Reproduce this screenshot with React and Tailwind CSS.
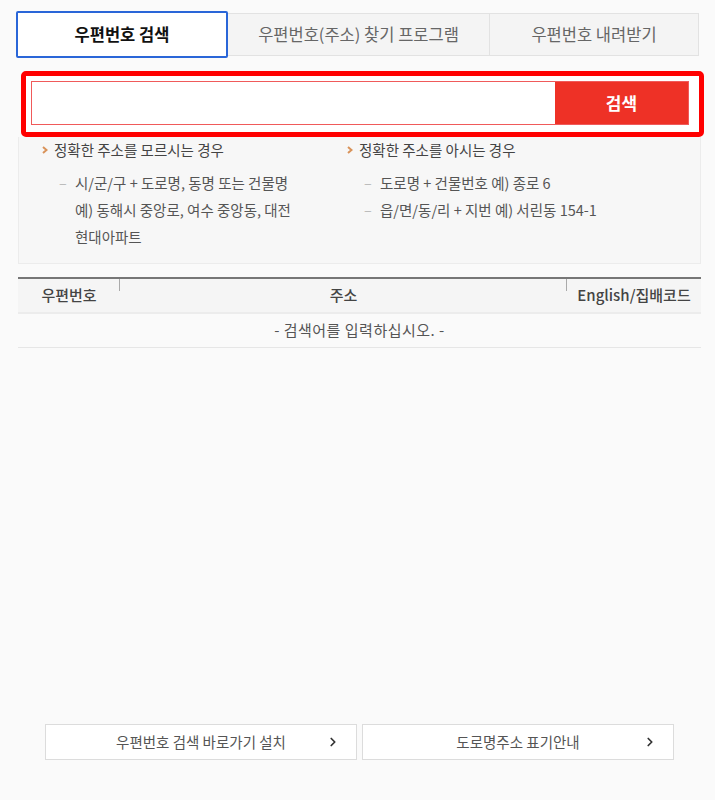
import { ChevronRight } from 'lucide-react';

const tabs = [
  { label: '우편번호(주소) 찾기 프로그램', width: 'w-[262px]' },
  { label: '우편번호 내려받기', width: 'w-[209px]' },
];

const unknownTips = [['시/군/구 + 도로명, 동명 또는 건물명', '예) 동해시 중앙로, 여수 중앙동, 대전', '현대아파트']];
const knownTips = [['도로명 + 건물번호 예) 종로 6'], ['읍/면/동/리 + 지번 예) 서린동 154-1']];

function TipColumn({ title, items, className }) {
  return (
    <div className={className}>
      <p className="flex items-center text-[14.5px] leading-[20px] text-[#444]">
        <svg className="mr-[6px] h-[8px] w-[6px]" viewBox="0 0 6 8">
          <polyline points="1,1 4.5,4 1,7" fill="none" stroke="#d9935a" strokeWidth="2" />
        </svg>
        {title}
      </p>
      <ul className="mt-[9px] pl-[17px]">
        {items.map((lines) => (
          <li key={lines[0]} className="flex text-[14.5px] leading-[27px] text-[#555]">
            <span className="w-[16px] shrink-0 text-[#bbb]">–</span>
            <div>
              {lines.map((line) => (
                <p key={line}>{line}</p>
              ))}
            </div>
          </li>
        ))}
      </ul>
    </div>
  );
}

export default function App() {
  return (
    <div className="flex min-h-[800px] flex-col bg-[#fafafa] font-['Noto_Sans_CJK_KR','Noto_Sans',sans-serif]">
      <div className="flex items-start pl-4 pt-[11px]">
        <div className="flex h-[47px] w-[212px] items-center justify-center rounded-[2px] border-2 border-[#2a66d8] bg-white text-[16.5px] font-bold text-[#111]">
          우편번호 검색
        </div>
        {tabs.map((tab) => (
          <div
            key={tab.label}
            className={`mt-[2px] flex h-[43px] ${tab.width} items-center justify-center border border-l-0 border-[#e2e2e2] bg-[#f4f4f4] text-[16.5px] text-[#666]`}
          >
            {tab.label}
          </div>
        ))}
      </div>

      <div className="ml-[21px] mt-[13px] flex h-[66px] w-[683px] rounded-[5px] border-[5px] border-[#ff0000] bg-white pb-[7px] pl-[5px] pr-[10px] pt-[5px]">
        <div className="flex flex-1 border border-[#f05a5a]">
          <input className="flex-1 bg-white outline-none" />
          <button className="w-[133px] bg-[#ee3126] text-[17px] font-bold text-white">검색</button>
        </div>
      </div>

      <div className="ml-[18px] mr-[14px] flex border border-t-0 border-[#ececec] bg-[#f7f7f7] pb-[13px] pl-[23px] pt-[3px]">
        <TipColumn className="w-[305px]" title="정확한 주소를 모르시는 경우" items={unknownTips} />
        <TipColumn title="정확한 주소를 아시는 경우" items={knownTips} />
      </div>

      <div className="ml-[18px] mr-[14px] mt-[13px] border-t-2 border-[#777]">
        <div className="flex h-[35px] border-b-2 border-[#ececec] bg-[#f5f5f5] text-[15px] font-medium text-[#444]">
          <div className="relative flex w-[102px] items-center justify-center">
            우편번호
            <span className="absolute right-0 top-0 h-[12px] w-px bg-[#aaa]" />
          </div>
          <div className="relative flex flex-1 items-center justify-center">
            주소
            <span className="absolute right-0 top-0 h-[12px] w-px bg-[#aaa]" />
          </div>
          <div className="flex w-[134px] items-center justify-center">English/집배코드</div>
        </div>
        <div className="flex h-[34px] items-center justify-center border-b border-[#e6e6e6] text-[15px] tracking-[0.5px] text-[#555]">
          - 검색어를 입력하십시오. -
        </div>
      </div>

      <div className="mt-auto flex gap-[5px] pb-10 pl-[45px]">
        {['우편번호 검색 바로가기 설치', '도로명주소 표기안내'].map((label) => (
          <button
            key={label}
            className="relative flex h-[36px] w-[312px] items-center justify-center border border-[#dcdcdc] bg-white text-[14.5px] text-[#555]"
          >
            {label}
            <ChevronRight className="absolute right-[16px] h-[14px] w-[14px] text-[#333]" strokeWidth={3} />
          </button>
        ))}
      </div>
    </div>
  );
}
